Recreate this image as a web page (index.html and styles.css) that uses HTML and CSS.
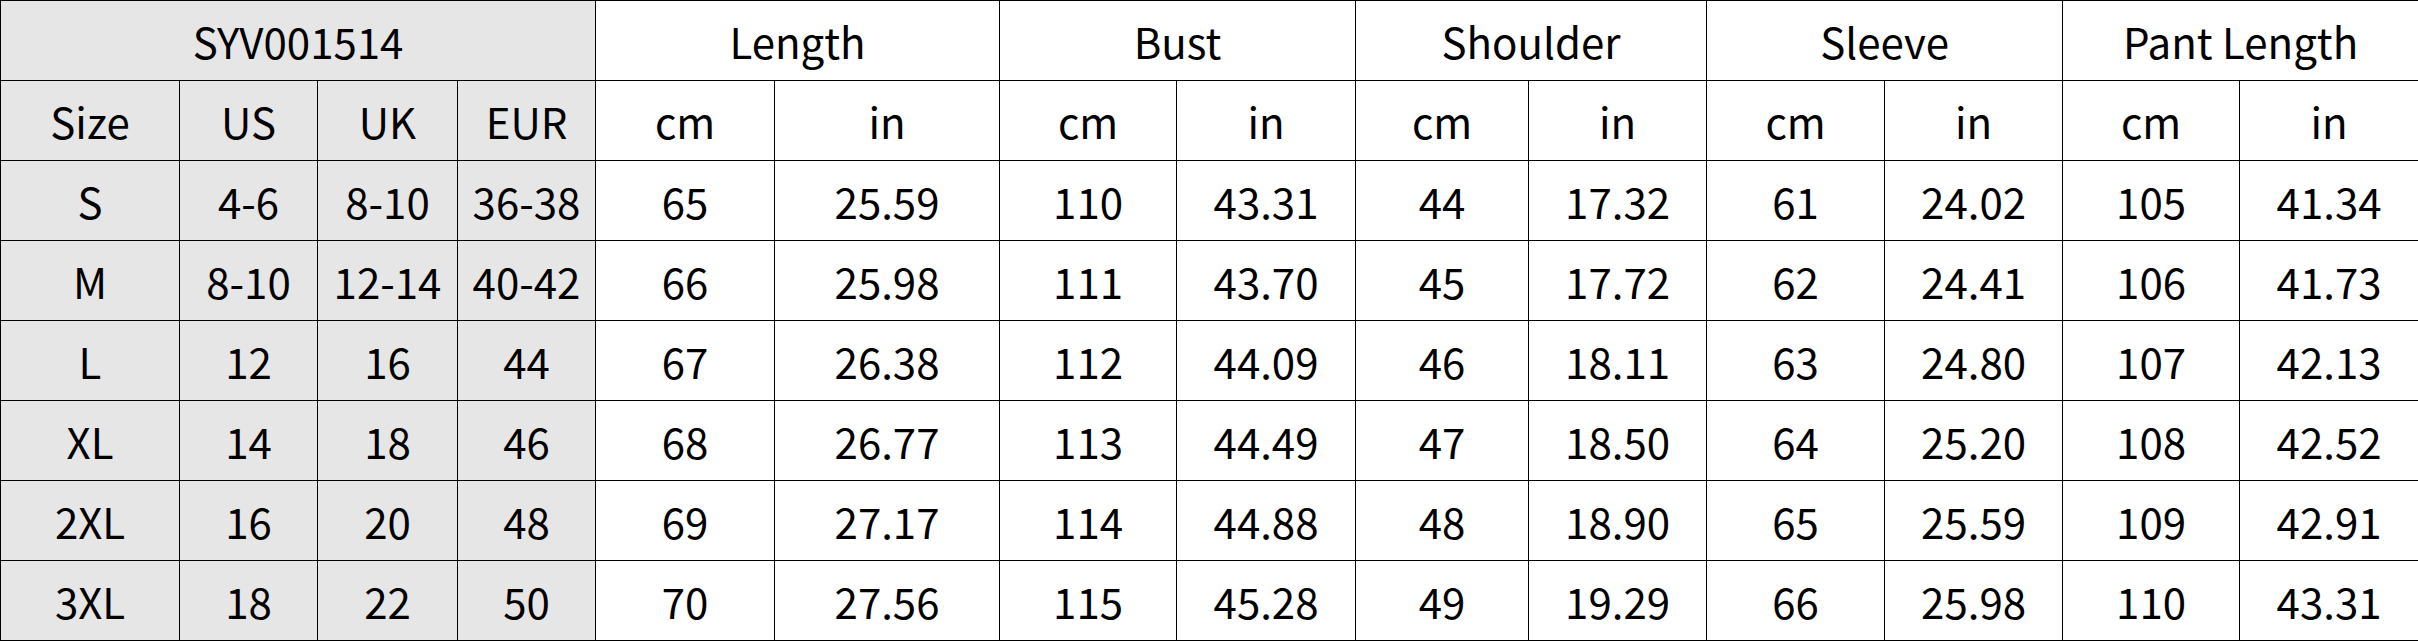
FILE: index.html
```html
<!DOCTYPE html>
<html>
<head>
<meta charset="utf-8">
<link rel="stylesheet" href="styles.css">
</head>
<body>
<table class="size-table">
  <colgroup>
    <col class="c179"><col class="c138"><col class="c140"><col class="c138">
    <col class="c179"><col class="c225">
    <col class="c177"><col class="c179">
    <col class="c173"><col class="c178">
    <col class="c178"><col class="c178">
    <col class="c177"><col class="c179">
  </colgroup>
  <tr>
    <td class="gray" colspan="4">SYV001514</td>
    <td colspan="2">Length</td>
    <td colspan="2">Bust</td>
    <td colspan="2">Shoulder</td>
    <td colspan="2">Sleeve</td>
    <td colspan="2">Pant Length</td>
  </tr>
  <tr>
    <td class="gray">Size</td><td class="gray">US</td><td class="gray">UK</td><td class="gray">EUR</td>
    <td>cm</td><td>in</td><td>cm</td><td>in</td><td>cm</td><td>in</td><td>cm</td><td>in</td><td>cm</td><td>in</td>
  </tr>
  <tr>
    <td class="gray">S</td><td class="gray">4-6</td><td class="gray">8-10</td><td class="gray">36-38</td>
    <td>65</td><td>25.59</td><td>110</td><td>43.31</td><td>44</td><td>17.32</td><td>61</td><td>24.02</td><td>105</td><td>41.34</td>
  </tr>
  <tr>
    <td class="gray">M</td><td class="gray">8-10</td><td class="gray">12-14</td><td class="gray">40-42</td>
    <td>66</td><td>25.98</td><td>111</td><td>43.70</td><td>45</td><td>17.72</td><td>62</td><td>24.41</td><td>106</td><td>41.73</td>
  </tr>
  <tr>
    <td class="gray">L</td><td class="gray">12</td><td class="gray">16</td><td class="gray">44</td>
    <td>67</td><td>26.38</td><td>112</td><td>44.09</td><td>46</td><td>18.11</td><td>63</td><td>24.80</td><td>107</td><td>42.13</td>
  </tr>
  <tr>
    <td class="gray">XL</td><td class="gray">14</td><td class="gray">18</td><td class="gray">46</td>
    <td>68</td><td>26.77</td><td>113</td><td>44.49</td><td>47</td><td>18.50</td><td>64</td><td>25.20</td><td>108</td><td>42.52</td>
  </tr>
  <tr>
    <td class="gray">2XL</td><td class="gray">16</td><td class="gray">20</td><td class="gray">48</td>
    <td>69</td><td>27.17</td><td>114</td><td>44.88</td><td>48</td><td>18.90</td><td>65</td><td>25.59</td><td>109</td><td>42.91</td>
  </tr>
  <tr>
    <td class="gray">3XL</td><td class="gray">18</td><td class="gray">22</td><td class="gray">50</td>
    <td>70</td><td>27.56</td><td>115</td><td>45.28</td><td>49</td><td>19.29</td><td>66</td><td>25.98</td><td>110</td><td>43.31</td>
  </tr>
</table>
</body>
</html>
```

FILE: styles.css
```css
html, body {
  margin: 0;
  padding: 0;
  background: #ffffff;
}

.size-table {
  width: 2418px;
  table-layout: fixed;
  border-collapse: collapse;
  font-family: "Noto Sans CJK SC", "Noto Sans", sans-serif;
  font-size: 42px;
  color: #000000;
}

.size-table tr {
  height: 80px;
}

.size-table td {
  border: 1px solid #000000;
  padding: 0;
  text-align: center;
  vertical-align: middle;
  line-height: 1;
  white-space: nowrap;
}

.size-table td.gray {
  background: #e7e6e6;
}

.c179 { width: 179px; }
.c138 { width: 138px; }
.c140 { width: 140px; }
.c225 { width: 225px; }
.c177 { width: 177px; }
.c173 { width: 173px; }
.c178 { width: 178px; }
```
